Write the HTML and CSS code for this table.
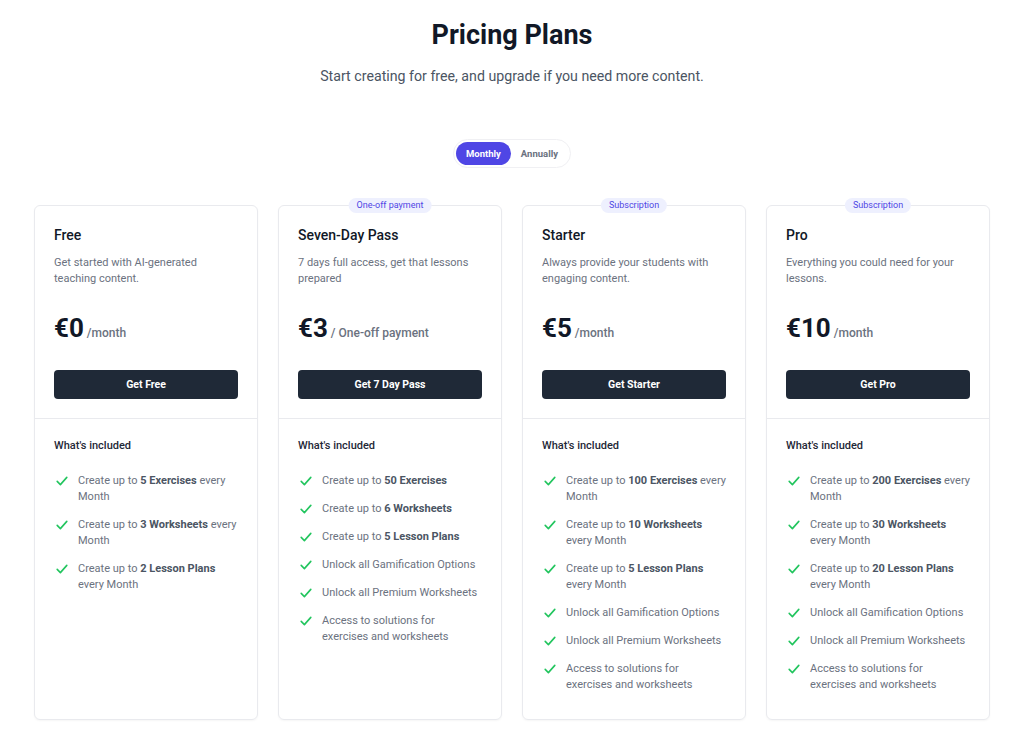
FILE: index.html
```html
<!DOCTYPE html>
<html lang="en">
<head>
<meta charset="utf-8">
<title>Pricing Plans</title>
<link rel="stylesheet" href="styles.css">
</head>
<body>
<main class="page">
  <header class="hero">
    <h1 class="title">Pricing Plans</h1>
    <p class="subtitle">Start creating for free, and upgrade if you need more content.</p>
  </header>
  <div class="toggle-wrap">
    <div class="toggle">
      <span class="toggle-opt active">Monthly</span>
      <span class="toggle-opt">Annually</span>
    </div>
  </div>
  <section class="plans">
    <article class="card">
      <div class="card-top">
        <h2 class="plan-name">Free</h2>
        <p class="plan-desc">Get started with AI-generated teaching content.</p>
        <p class="price"><span class="amount">€0</span> <span class="per">/month</span></p>
        <button class="cta">Get Free</button>
      </div>
      <div class="card-body">
        <h3 class="incl">What's included</h3>
        <ul class="features">
          <li><svg class="check" viewBox="0 0 20 20"><path d="M4 10.5l4 4 8-9"/></svg><span>Create up to <b>5 Exercises</b> every Month</span></li>
          <li><svg class="check" viewBox="0 0 20 20"><path d="M4 10.5l4 4 8-9"/></svg><span>Create up to <b>3 Worksheets</b> every Month</span></li>
          <li><svg class="check" viewBox="0 0 20 20"><path d="M4 10.5l4 4 8-9"/></svg><span>Create up to <b>2 Lesson Plans</b> every Month</span></li>
        </ul>
      </div>
    </article>
    <article class="card">
      <span class="badge">One-off payment</span>
      <div class="card-top">
        <h2 class="plan-name">Seven-Day Pass</h2>
        <p class="plan-desc">7 days full access, get that lessons prepared</p>
        <p class="price"><span class="amount">€3</span> <span class="per">/ One-off payment</span></p>
        <button class="cta">Get 7 Day Pass</button>
      </div>
      <div class="card-body">
        <h3 class="incl">What's included</h3>
        <ul class="features">
          <li><svg class="check" viewBox="0 0 20 20"><path d="M4 10.5l4 4 8-9"/></svg><span>Create up to <b>50 Exercises</b></span></li>
          <li><svg class="check" viewBox="0 0 20 20"><path d="M4 10.5l4 4 8-9"/></svg><span>Create up to <b>6 Worksheets</b></span></li>
          <li><svg class="check" viewBox="0 0 20 20"><path d="M4 10.5l4 4 8-9"/></svg><span>Create up to <b>5 Lesson Plans</b></span></li>
          <li><svg class="check" viewBox="0 0 20 20"><path d="M4 10.5l4 4 8-9"/></svg><span>Unlock all Gamification Options</span></li>
          <li><svg class="check" viewBox="0 0 20 20"><path d="M4 10.5l4 4 8-9"/></svg><span>Unlock all Premium Worksheets</span></li>
          <li><svg class="check" viewBox="0 0 20 20"><path d="M4 10.5l4 4 8-9"/></svg><span>Access to solutions for exercises and worksheets</span></li>
        </ul>
      </div>
    </article>
    <article class="card">
      <span class="badge">Subscription</span>
      <div class="card-top">
        <h2 class="plan-name">Starter</h2>
        <p class="plan-desc">Always provide your students with engaging content.</p>
        <p class="price"><span class="amount">€5</span> <span class="per">/month</span></p>
        <button class="cta">Get Starter</button>
      </div>
      <div class="card-body">
        <h3 class="incl">What's included</h3>
        <ul class="features">
          <li><svg class="check" viewBox="0 0 20 20"><path d="M4 10.5l4 4 8-9"/></svg><span>Create up to <b>100 Exercises</b> every Month</span></li>
          <li><svg class="check" viewBox="0 0 20 20"><path d="M4 10.5l4 4 8-9"/></svg><span>Create up to <b>10 Worksheets</b> every Month</span></li>
          <li><svg class="check" viewBox="0 0 20 20"><path d="M4 10.5l4 4 8-9"/></svg><span>Create up to <b>5 Lesson Plans</b> every Month</span></li>
          <li><svg class="check" viewBox="0 0 20 20"><path d="M4 10.5l4 4 8-9"/></svg><span>Unlock all Gamification Options</span></li>
          <li><svg class="check" viewBox="0 0 20 20"><path d="M4 10.5l4 4 8-9"/></svg><span>Unlock all Premium Worksheets</span></li>
          <li><svg class="check" viewBox="0 0 20 20"><path d="M4 10.5l4 4 8-9"/></svg><span>Access to solutions for exercises and worksheets</span></li>
        </ul>
      </div>
    </article>
    <article class="card">
      <span class="badge">Subscription</span>
      <div class="card-top">
        <h2 class="plan-name">Pro</h2>
        <p class="plan-desc">Everything you could need for your lessons.</p>
        <p class="price"><span class="amount">€10</span> <span class="per">/month</span></p>
        <button class="cta">Get Pro</button>
      </div>
      <div class="card-body">
        <h3 class="incl">What's included</h3>
        <ul class="features">
          <li><svg class="check" viewBox="0 0 20 20"><path d="M4 10.5l4 4 8-9"/></svg><span>Create up to <b>200 Exercises</b> every Month</span></li>
          <li><svg class="check" viewBox="0 0 20 20"><path d="M4 10.5l4 4 8-9"/></svg><span>Create up to <b>30 Worksheets</b> every Month</span></li>
          <li><svg class="check" viewBox="0 0 20 20"><path d="M4 10.5l4 4 8-9"/></svg><span>Create up to <b>20 Lesson Plans</b> every Month</span></li>
          <li><svg class="check" viewBox="0 0 20 20"><path d="M4 10.5l4 4 8-9"/></svg><span>Unlock all Gamification Options</span></li>
          <li><svg class="check" viewBox="0 0 20 20"><path d="M4 10.5l4 4 8-9"/></svg><span>Unlock all Premium Worksheets</span></li>
          <li><svg class="check" viewBox="0 0 20 20"><path d="M4 10.5l4 4 8-9"/></svg><span>Access to solutions for exercises and worksheets</span></li>
        </ul>
      </div>
    </article>
  </section>
</main>
</body>
</html>
```
FILE: styles.css
```css
* { box-sizing: border-box; }
html, body { margin: 0; padding: 0; background: #ffffff; }
body {
  font-family: Roboto, "Noto Sans", "Liberation Sans", sans-serif;
  color: #111827;
}
.page {
  width: 956px;
  margin: 0 auto;
  padding: 18px 0 20px;
}
.hero { text-align: center; }
.title {
  margin: 0;
  font-size: 27px;
  line-height: 34px;
  font-weight: 700;
  color: #111827;
}
.subtitle {
  margin: 14px 0 0;
  font-size: 14.2px;
  line-height: 20px;
  color: #4b5563;
}
.toggle-wrap {
  display: flex;
  justify-content: center;
  margin-top: 53px;
}
.toggle {
  display: flex;
  padding: 2px;
  border: 1px solid #f0f0f3;
  border-radius: 999px;
  background: #fff;
}
.toggle-opt {
  font-size: 9.5px;
  font-weight: 700;
  line-height: 23px;
  padding: 0 10px;
  border-radius: 999px;
  color: #6b7280;
}
.toggle-opt.active {
  background: #4f46e5;
  color: #fff;
}
.plans {
  margin-top: 37px;
  display: grid;
  grid-template-columns: repeat(4, 1fr);
  gap: 20px;
}
.card {
  position: relative;
  border: 1px solid #e9eaee;
  border-radius: 6px;
  box-shadow: 0 1px 2px rgba(0,0,0,0.04);
  display: flex;
  flex-direction: column;
}
.badge {
  position: absolute;
  top: -8px;
  left: 50%;
  transform: translateX(-50%);
  background: #eef0fe;
  color: #4f46e5;
  font-size: 9px;
  line-height: 15px;
  padding: 0 8px;
  border-radius: 999px;
  white-space: nowrap;
}
.card-top {
  padding: 19px 19px 19px;
  border-bottom: 1px solid #e9eaee;
}
.plan-name {
  margin: 0;
  font-size: 14px;
  line-height: 20px;
  font-weight: 500;
  color: #111827;
}
.plan-desc {
  margin: 10px 0 0;
  font-size: 11px;
  line-height: 16px;
  color: #6b7280;
  min-height: 32px;
}
.price {
  margin: 28px 0 0;
  display: flex;
  align-items: baseline;
  gap: 3px;
  line-height: 1;
}
.amount {
  font-size: 26px;
  line-height: 26px;
  font-weight: 700;
  color: #111827;
}
.per {
  font-size: 12px;
  font-weight: 500;
  color: #6b7280;
}
.cta {
  display: block;
  width: 100%;
  margin-top: 29px;
  height: 29px;
  border: 0;
  border-radius: 4px;
  background: #1f2937;
  color: #fff;
  font-family: inherit;
  font-size: 10.5px;
  font-weight: 700;
}
.card-body {
  padding: 19px 18px 26px 19px;
}
.incl {
  margin: 0;
  font-size: 11px;
  line-height: 16px;
  font-weight: 500;
  color: #1f2937;
}
.features {
  list-style: none;
  margin: 19px 0 0;
  padding: 0;
  display: flex;
  flex-direction: column;
  gap: 12px;
}
.features li {
  display: flex;
  gap: 8px;
  font-size: 11px;
  line-height: 16px;
  color: #6b7280;
}
.features b {
  font-weight: 700;
  color: #4b5563;
}
.check {
  flex: none;
  width: 16px;
  height: 16px;
  fill: none;
  stroke: #22c55e;
  stroke-width: 2;
  stroke-linecap: round;
  stroke-linejoin: round;
}
```
